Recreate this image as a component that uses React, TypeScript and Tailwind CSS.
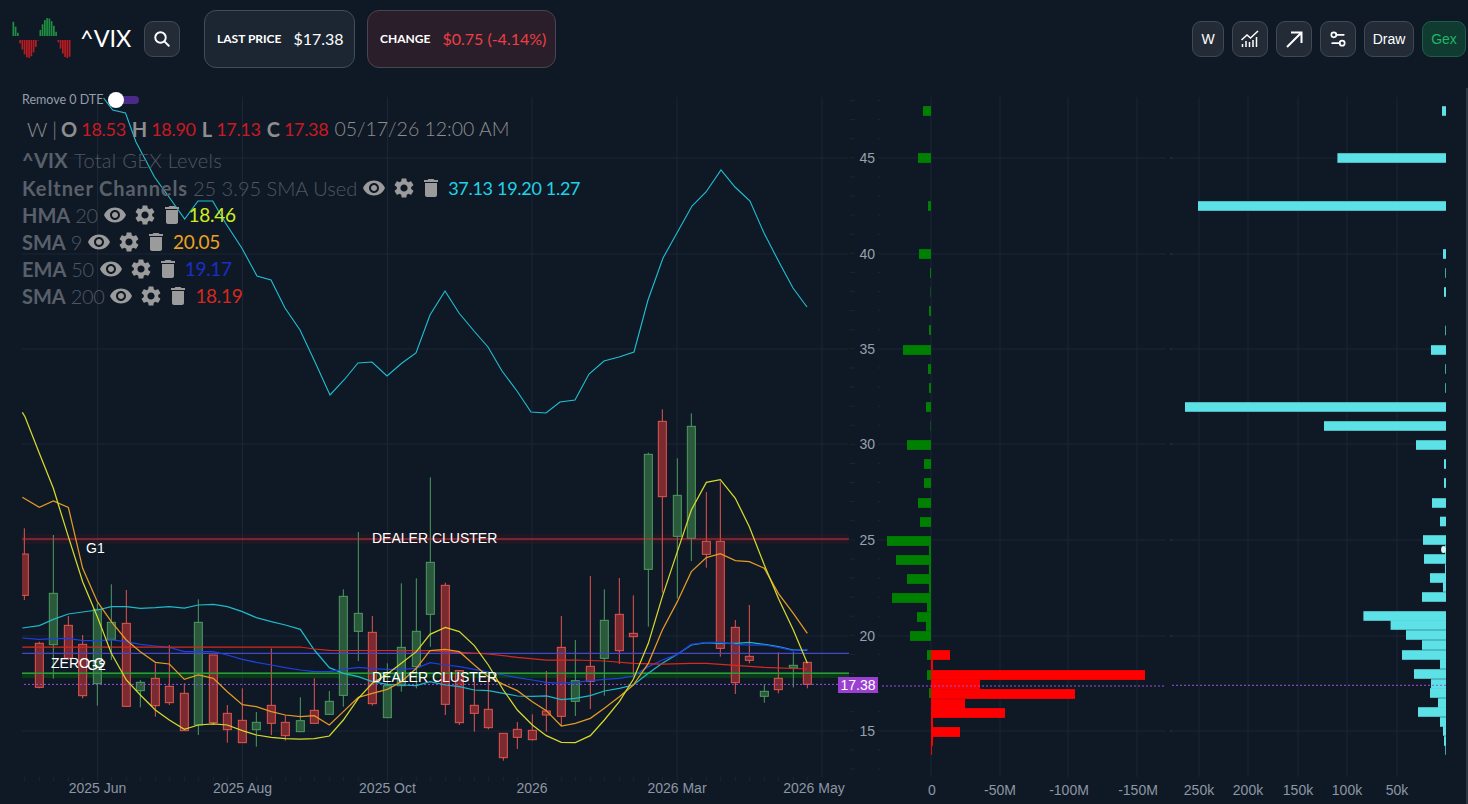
import { Settings2 } from "lucide-react";
import { MdDelete, MdSettings, MdVisibility } from "react-icons/md";

type Candle = [number, number, number, number, number, "r" | "g"];

// x, wick top, wick bottom, body top, body bottom
const left: Candle[] = [
  [73, 385, 600, 462, 586, "r"], [118, 725, 865, 730, 862, "r"], [160, 405, 836, 580, 734, "g"],
  [205, 648, 780, 676, 775, "r"], [248, 705, 895, 733, 887, "r"], [292, 610, 917, 628, 851, "g"],
  [334, 553, 780, 667, 718, "g"], [379, 570, 920, 670, 919, "r"], [421, 840, 922, 847, 872, "g"],
  [466, 790, 950, 835, 917, "r"], [508, 735, 915, 859, 908, "r"], [553, 850, 992, 880, 992, "r"],
  [595, 598, 1005, 667, 975, "g"], [640, 765, 975, 765, 968, "r"], [682, 915, 1028, 940, 989, "r"],
  [727, 865, 1028, 961, 1028, "r"], [769, 936, 1040, 967, 989, "g"], [814, 745, 1005, 916, 970, "r"],
  [856, 945, 1022, 967, 1007, "r"], [901, 892, 995, 962, 995, "g"], [943, 835, 970, 931, 970, "r"],
  [988, 873, 944, 904, 943, "g"], [1030, 568, 920, 589, 886, "g"], [1075, 396, 783, 640, 694, "g"],
  [1117, 648, 917, 697, 911, "r"], [1162, 790, 953, 857, 953, "g"], [1204, 550, 875, 742, 857, "g"],
  [1249, 535, 865, 694, 800, "g"], [1291, 232, 740, 487, 643, "g"],
];
const right: Candle[] = [
  [46, 548, 945, 556, 913, "r"], [88, 810, 975, 812, 968, "r"], [133, 845, 995, 916, 940, "r"],
  [175, 835, 988, 928, 983, "r"], [220, 1000, 1082, 1000, 1073, "r"], [262, 966, 1047, 988, 1012, "r"],
  [307, 943, 1022, 991, 1019, "r"], [349, 813, 995, 933, 945, "r"], [394, 648, 978, 742, 949, "r"],
  [436, 720, 948, 842, 904, "g"], [481, 528, 927, 799, 844, "r"], [523, 568, 887, 661, 775, "g"],
  [568, 534, 792, 643, 752, "r"], [610, 586, 830, 700, 710, "r"], [655, 158, 680, 163, 508, "g"],
  [697, 28, 578, 64, 290, "r"], [742, 175, 595, 286, 409, "g"], [784, 40, 483, 79, 415, "g"],
  [829, 276, 503, 424, 463, "r"], [871, 245, 770, 424, 745, "r"], [916, 660, 882, 682, 848, "r"],
  [958, 615, 790, 769, 781, "r"], [1003, 853, 908, 874, 889, "g"], [1045, 757, 880, 835, 869, "r"],
  [1090, 755, 862, 796, 804, "g"], [1132, 787, 865, 787, 853, "r"],
];
const candles = [...left, ...right.map((c) => [c[0] + 1290, c[1], c[2], c[3], c[4], c[5]] as Candle)];

const line = (a: number[], b: number[]) => {
  const pts: string[] = [];
  for (let i = 0; i < a.length; i += 2) pts.push(`${a[i] / 3},${400 + a[i + 1] / 3}`);
  for (let i = 0; i < b.length; i += 2) pts.push(`${(b[i] + 1290) / 3},${400 + b[i + 1] / 3}`);
  return pts.join(" ");
};

const hma = line(
  [67,37,75,50,118,160,160,265,205,410,248,545,292,650,334,760,379,840,421,885,466,930,508,960,553,988,595,975,640,972,682,975,727,992,769,1005,814,1012,856,1016,901,1017,943,1016,988,1008,1030,960,1075,895,1117,850,1162,822,1204,790,1249,755],
  [0,703,46,682,88,695,133,737,175,795,220,870,262,930,307,975,349,1007,394,1027,436,1028,481,1007,523,960,568,905,610,838,655,730,697,590,742,455,784,330,829,247,871,239,916,295,958,380,1003,495,1045,595,1090,690,1132,790],
);
const sma9 = line(
  [67,292,118,322,160,303,205,322,248,505,292,605,334,665,379,720,421,755,466,787,508,792,553,838,595,825,640,835,682,875,727,914,769,920,814,935,856,945,901,950,943,947,988,975,1030,935,1075,892,1117,880,1162,868,1204,845,1249,805],
  [0,752,46,748,88,755,133,795,175,830,220,853,262,872,307,905,349,932,394,978,436,970,481,955,523,925,568,890,610,855,655,790,697,690,742,605,784,515,829,473,871,461,916,482,958,485,1003,505,1045,580,1090,640,1132,700],
);
const keltnerMid = line(
  [67,684,118,677,160,658,205,642,248,636,292,630,334,620,379,620,421,625,466,623,508,620,553,624,595,615,640,613,682,620,727,635,769,653,814,665,856,675,901,688,943,750,988,803,1030,820,1075,830,1117,845,1162,853,1204,855,1249,857],
  [0,845,46,855,88,860,133,870,175,872,220,880,262,888,307,889,349,888,394,899,436,895,481,887,523,873,568,865,610,855,655,820,697,790,742,763,784,735,829,728,871,730,916,730,958,727,1003,733,1045,740,1090,750,1132,750],
);
const ema50 = line(
  [67,714,118,718,160,716,205,715,248,722,292,722,334,720,379,725,421,733,466,738,508,742,553,755,595,755,640,755,682,765,727,778,769,787,814,795,856,803,901,810,943,815,988,815,1030,808,1075,802,1117,806,1162,808,1204,808,1249,805],
  [0,788,46,795,88,800,133,808,175,816,220,825,262,833,307,840,349,847,394,850,436,847,481,842,523,838,568,835,610,828,655,800,697,780,742,763,784,733,829,727,871,727,916,733,958,735,1003,735,1045,742,1090,752,1132,748],
);
const sma200 = line(
  [67,741,901,741,943,747,988,751],
  [0,752,88,757,175,762,262,772,349,780,436,780,523,783,610,790,697,792,784,790,829,790,916,796,1003,802,1132,807],
);
const keltnerTop =
  "103.6,98 112.7,110 125.5,113 136,142 154.5,177 169,197 184.7,219 198,201 212.7,201 225.5,223 241.8,248 257,276 271,280 285,308 300,330 315,362 330,395 344,380 358,363 372,362 387,376 402,363 416,353 430,315 445,291 459,313 474,331 488,347 502,371 517,391 531,412 546,413 560,402 575,400 589,374 604,361 619,357 634,352 648,300 663,258 692,206 706,192 721,170 735,187 750,201 764,233 779,262 793,288 807,307";

const majors = [158, 254, 349, 444, 540, 636, 731];
const minors = Array.from({ length: 36 }, (_, i) => 769 - i * 19.1);
const dates = [
  [97.5, "2025 Jun"], [242.5, "2025 Aug"], [387.5, "2025 Oct"], [532, "2026"], [677, "2026 Mar"], [814, "2026 May"],
] as const;

// y centre, left edge of the bar
const greenBars = [
  [111,923],[158,918],[206,928],[254,919],[273,930],[292,930.5],[311,929],[330,929],[350,903],[369,928],[388,929],[407,926],[426,930.5],[445,907],[464,924],[483,924],[503,918],[522,920],[541,887],[550.5,929],[560,896],[569.5,929],[579,907],[588,929],[598,892],[607,927],[617,917],[626,926],[636,910],[655,927],[675,927],[693,929],
];
// y centre, right edge of the bar
const redBars = [
  [655,950],[665,933],[675,1145],[684.5,980],[694,1075],[704,965],[713,1005],[722.5,933],[732,960],[741,933],[750,932],
];
const cyanBars = [
  [111,1442],[158,1337.4],[206,1198],[254,1443],[273,1445.3],[292,1444],[330.5,1445.3],[350,1431],[369,1445.3],[388,1445.3],[407,1185],[426,1324],[445,1416],[464,1444],[483,1444],[503,1432],[521.5,1440],[540,1423],[550,1445],[559,1424],[569,1445],[578,1430],[587,1443],[597,1422],[616,1363.4],[625,1390.6],[635,1406],[645,1422],[655,1402],[664,1440],[674,1414],[684,1431],[693,1430],[703,1438],[712,1418],[722,1440],[731,1443],[741,1444],[750,1445.3],
];

const logoBars = Array.from({ length: 26 }, (_, i) => {
  const x = 12.5 + i * 2.25;
  return { x, v: Math.sin(((x - 37.4) * Math.PI) / 19.3) };
});

const Logo = () => (
  <svg width="80" height="44" viewBox="0 18 80 44" className="shrink-0">
    {logoBars.map(({ x, v }) =>
      v > 0 ? (
        <rect key={x} x={x} y={37 - v * 18} width="1.7" height={v * 18} fill="#1f8f42" />
      ) : (
        <rect key={x} x={x} y="41" width="1.7" height={-v * 18} fill="#b81c22" />
      ),
    )}
  </svg>
);

const IconBtn = ({ children, className = "w-9" }: { children: React.ReactNode; className?: string }) => (
  <div className={`h-9 ${className} flex items-center justify-center rounded-[9px] border border-[#3f4853] bg-[#232b36] text-white text-sm font-['Liberation_Sans',sans-serif]`}>
    {children}
  </div>
);

const Actions = () => (
  <div className="flex items-center text-[#9b9b9b] ml-[5px] mr-[5px]">
    <MdVisibility size={24} />
    <MdSettings size={24} className="ml-[6px]" />
    <MdDelete size={24} className="ml-[3px] -scale-x-100" />
  </div>
);

const Study = ({
  name,
  params,
  value,
  color,
  nameClass = "",
  paramClass = "tracking-[-0.4px]",
}: {
  name: string;
  params: string;
  value: string;
  color: string;
  nameClass?: string;
  paramClass?: string;
}) => (
  <div className="h-[27px] flex items-center whitespace-nowrap">
    <b className={`font-bold text-[#5a606a] ${nameClass}`}>{name}</b>
    <span className={`ml-[5px] text-[#4f5661] ${paramClass}`}>{params}</span>
    <Actions />
    <span className={`font-normal ${color}`}>{value}</span>
  </div>
);

const PriceChart = () => (
  <svg width="880" height="726" viewBox="0 78 880 726" className="shrink-0 font-['Liberation_Sans',sans-serif]">
    <defs>
      <clipPath id="plot">
        <rect x="22" y="90" width="858" height="700" />
      </clipPath>
    </defs>
    {majors.map((y) => (
      <line key={y} x1="22" x2="848" y1={y} y2={y} stroke="#1b2533" />
    ))}
    {dates.map(([x]) => (
      <line key={x} x1={x === 814 ? 822 : x} x2={x === 814 ? 822 : x} y1="97" y2="777" stroke="#1b2533" />
    ))}
    {candles.map((c) => (
      <line key={c[0]} x1={c[0] / 3} x2={c[0] / 3} y1="777" y2="781" stroke="#1b2533" />
    ))}
    {minors.map((y) => (
      <g key={y} stroke="#1b2533">
        <line x1="850" x2="855" y1={y} y2={y} />
        <line x1="878" x2="880" y1={y} y2={y} />
      </g>
    ))}

    <rect x="22" y="534" width="827" height="10" fill="#ff0000" fillOpacity="0.07" />
    <rect x="22" y="672" width="827" height="6" fill="#008000" fillOpacity="0.3" />

    <g clipPath="url(#plot)">
      {candles.map(([x, wt, wb, bt, bb, side]) => {
        const stroke = side === "r" ? "#e3554f" : "#4f9b60";
        const fill = side === "r" ? "#7b2a30" : "#2a5a3b";
        return (
          <g key={x}>
            <line x1={x / 3} x2={x / 3} y1={400 + wt / 3} y2={400 + wb / 3} stroke={stroke} />
            <rect x={x / 3 - 4} y={400 + bt / 3} width="8" height={(bb - bt) / 3} fill={fill} stroke={stroke} />
          </g>
        );
      })}
    </g>

    <line x1="22" x2="849" y1="539" y2="539" stroke="#c9343a" strokeWidth="1.1" />
    <line x1="22" x2="849" y1="653.4" y2="653.4" stroke="#4648c8" strokeWidth="1.2" />
    <line x1="22" x2="849" y1="673.3" y2="673.3" stroke="#2f9a3c" strokeWidth="1.6" />
    <line x1="24" x2="838" y1="684.4" y2="684.4" stroke="#9b4fe0" strokeDasharray="2 2" />

    <polyline points={keltnerTop} fill="none" stroke="#1fc0d4" strokeWidth="1.1" />
    <polyline points={keltnerMid} fill="none" stroke="#1fb8c9" strokeWidth="1.25" />
    <polyline points={ema50} fill="none" stroke="#1f3fe0" strokeWidth="1.25" />
    <polyline points={sma200} fill="none" stroke="#d8281f" strokeWidth="1.25" />
    <polyline points={sma9} fill="none" stroke="#e59a25" strokeWidth="1.25" />
    <polyline points={hma} fill="none" stroke="#d4d92b" strokeWidth="1.25" />

    <g fill="#ffffff" fontSize="14">
      <text x="372" y="543">DEALER CLUSTER</text>
      <text x="372" y="682">DEALER CLUSTER</text>
      <text x="86" y="553">G1</text>
      <text x="51" y="668">ZERO G</text>
      <text x="87" y="670">G2</text>
    </g>

    <g fill="#8d96a3" fontSize="14" textAnchor="middle">
      {dates.map(([x, label]) => (
        <text key={x} x={x} y="793">{label}</text>
      ))}
    </g>
    <g fill="#97a0ac" fontSize="14" textAnchor="end">
      {[45, 40, 35, 30, 25, 20, 15].map((p, i) => (
        <text key={p} x="875" y={majors[i] + 5}>{p}</text>
      ))}
    </g>

    <rect x="838" y="677" width="40" height="16" fill="#9a3fd0" />
    <text x="858" y="690" fill="#ffffff" fontSize="14" textAnchor="middle">17.38</text>
  </svg>
);

const GexChart = () => (
  <svg width="290" height="726" viewBox="880 78 290 726" className="shrink-0 font-['Liberation_Sans',sans-serif]">
    {[931, 1000, 1068, 1137].map((x) => (
      <line key={x} x1={x} x2={x} y1="97" y2="777" stroke="#1b2533" />
    ))}
    {majors.map((y) => (
      <line key={y} x1="880" x2="1166" y1={y} y2={y} stroke="#1b2533" />
    ))}
    {greenBars.map(([y, x]) => (
      <rect key={y} x={x} y={y - 4.9} width={931 - x} height="9.8" fill="#008000" />
    ))}
    {redBars.map(([y, x]) => (
      <rect key={y} x="931" y={y - 4.9} width={x - 931} height="9.8" fill="#ff0000" />
    ))}
    <line x1="882" x2="1166" y1="686" y2="686" stroke="#9b4fe0" strokeDasharray="2 2" />
    <g fill="#8d96a3" fontSize="14" textAnchor="middle">
      <text x="932" y="795">0</text>
      <text x="1000" y="795">-50M</text>
      <text x="1069" y="795">-100M</text>
      <text x="1138" y="795">-150M</text>
    </g>
  </svg>
);

const VolumeChart = () => (
  <svg width="296" height="726" viewBox="1170 78 296 726" className="shrink-0 font-['Liberation_Sans',sans-serif]">
    {[1199, 1248, 1298, 1347, 1397].map((x) => (
      <line key={x} x1={x} x2={x} y1="97" y2="777" stroke="#1b2533" />
    ))}
    {majors.map((y) => (
      <g key={y} stroke="#1b2533">
        <line x1="1170" x2="1446" y1={y} y2={y} />
        <line x1="1166" x2="1172" y1={y} y2={y} stroke="#2b3644" />
      </g>
    ))}
    {cyanBars.map(([y, x]) => (
      <rect key={y} x={x} y={y - 4.8} width={1446 - x} height="9.6" fill="#5ce1e6" />
    ))}
    <line x1="1172" x2="1446" y1="685.3" y2="685.3" stroke="#9b4fe0" strokeDasharray="2 2" />
    <ellipse cx="1443.5" cy="549.5" rx="2.4" ry="3.6" fill="#d8f6f8" />
    <g fill="#8d96a3" fontSize="14" textAnchor="middle">
      <text x="1199" y="795">250k</text>
      <text x="1248" y="795">200k</text>
      <text x="1298" y="795">150k</text>
      <text x="1347" y="795">100k</text>
      <text x="1397" y="795">50k</text>
    </g>
  </svg>
);

export default function App() {
  return (
    <div className="w-[1468px] h-[804px] overflow-hidden bg-[#0f1926] font-['Lato',sans-serif]">
      <div className="h-[78px] flex items-center justify-between pr-[2px]">
        <div className="flex items-center">
          <Logo />
          <span className="w-[52px] text-white text-[23.5px] whitespace-nowrap">^VIX</span>
          <div className="ml-3">
            <IconBtn>
              <svg width="18" height="18" viewBox="0 0 24 24" fill="none" stroke="#ffffff" strokeWidth="2.6" strokeLinecap="round">
                <circle cx="10" cy="10" r="7" />
                <path d="M15.5 15.5 21 21" />
              </svg>
            </IconBtn>
          </div>
          <div className="ml-6 h-[58px] w-[151px] flex items-center gap-[12px] rounded-xl border border-[#434d5a] bg-[#1c2632] pl-3">
            <span className="text-white text-xs font-bold">LAST PRICE</span>
            <span className="text-white text-[16px]">$17.38</span>
          </div>
          <div className="ml-3 h-[58px] w-[189px] flex items-center gap-3 rounded-xl border border-[#4a4450] bg-[#2a1e2a] pl-3">
            <span className="text-white text-xs font-bold">CHANGE</span>
            <span className="text-[#ef3e44] text-[16px]">$0.75 (-4.14%)</span>
          </div>
        </div>
        <div className="flex items-center gap-2">
          <IconBtn className="w-8">W</IconBtn>
          <IconBtn>
            <svg width="20" height="20" viewBox="0 0 20 20" fill="none" stroke="#ffffff" strokeWidth="1.5">
              <path d="M1.5 11 7 6l3.5 3L18 2" />
              <path d="M2.5 18v-3M6 18v-6M9.5 18v-5M13 18v-7M16.5 18V8" />
            </svg>
          </IconBtn>
          <IconBtn>
            <svg width="20" height="20" viewBox="0 0 20 20" fill="none" stroke="#ffffff" strokeWidth="2">
              <path d="M3 18 17 4M7 3.5h10.5V14" />
            </svg>
          </IconBtn>
          <IconBtn>
            <Settings2 size={20} strokeWidth={2} />
          </IconBtn>
          <IconBtn className="w-[50px]">Draw</IconBtn>
          <div className="h-9 w-11 flex items-center justify-center rounded-[9px] border border-[#1f5b49] bg-[#0f3b31] text-[#22b567] text-sm font-['Liberation_Sans',sans-serif]">
            Gex
          </div>
        </div>
      </div>

      <div className="relative flex">
        <PriceChart />
        <GexChart />
        <VolumeChart />
        <div className="mt-[10px] w-[2px] h-[716px] bg-[#2d3643]" />

        <div className="absolute left-[22px] top-[14px] text-[20px] font-light leading-none">
          <div className="flex items-center h-4 text-[12.5px] text-[#969ea9] font-normal">
            Remove 0 DTE
            <div className="relative ml-[6px] w-[30px] h-4">
              <div className="absolute left-[4px] top-1 h-2 w-[26px] rounded-full bg-[#4a2a86]" />
              <div className="absolute -left-[1px] top-0 h-4 w-4 rounded-full bg-white" />
            </div>
          </div>
          <div className="mt-[9px] ml-[5px] h-[24px] flex items-center gap-[4px] whitespace-nowrap text-[#8e8e8e]">
            <span>W |</span>
            <b className="font-bold">O</b>
            <span className="text-[#cc1820] font-normal text-[18px] tracking-[-0.3px]">18.53</span>
            <b className="font-bold ml-[2px]">H</b>
            <span className="text-[#cc1820] font-normal text-[18px] tracking-[-0.3px]">18.90</span>
            <b className="font-bold ml-[2px]">L</b>
            <span className="text-[#cc1820] font-normal text-[18px] tracking-[-0.3px]">17.13</span>
            <b className="font-bold ml-[2px]">C</b>
            <span className="text-[#cc1820] font-normal text-[18px] tracking-[-0.3px]">17.38</span>
            <span className="text-[19.5px] ml-[2px]">05/17/26 12:00 AM</span>
          </div>
          <div className="mt-[5px] mb-[1px] h-[27px] flex items-center gap-[6px] whitespace-nowrap text-[#4f5661] tracking-[0.3px]">
            <b className="font-bold text-[#5a606a]">^VIX</b>
            Total GEX Levels
          </div>
          <Study name="Keltner Channels" nameClass="tracking-[0.9px]" paramClass="tracking-[0px]" params="25 3.95 SMA Used" value="37.13 19.20 1.27" color="text-[#1fd3e6] text-[18px] tracking-[-0.3px]" />
          <Study name="HMA" params="20" value="18.46" color="text-[#d3ec20] text-[19px] tracking-[-0.3px]" />
          <Study name="SMA" params="9" value="20.05" color="text-[#eca21e] text-[19px] tracking-[-0.3px]" />
          <Study name="EMA" params="50" value="19.17" color="text-[#1a2ec8] text-[19px] tracking-[-0.3px]" />
          <Study name="SMA" params="200" value="18.19" color="text-[#d8281c] text-[19px] tracking-[-0.3px]" />
        </div>
      </div>
    </div>
  );
}
